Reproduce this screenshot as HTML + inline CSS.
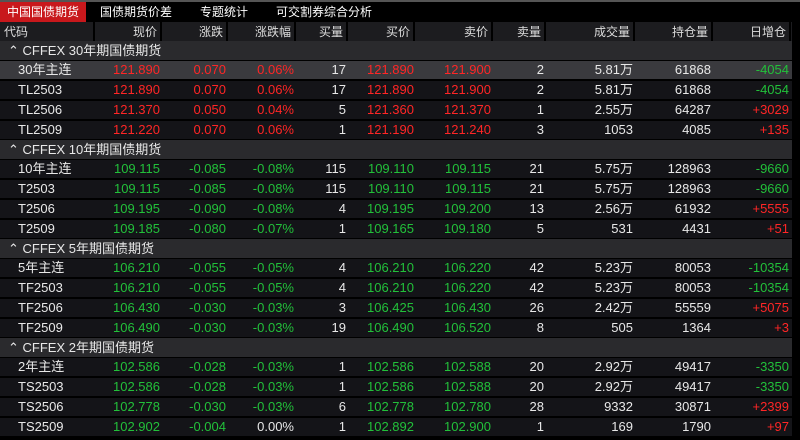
<!DOCTYPE html>
<html><head><meta charset="utf-8"><style>
*{margin:0;padding:0;box-sizing:border-box}
body{width:800px;height:440px;overflow:hidden;background:#000;font-family:"Liberation Sans","Noto Sans CJK SC",sans-serif;font-size:13px;color:#e8e8e8;position:relative}
.top{position:absolute;left:0;top:0;width:800px;height:2px;background:#555}
.tabs{position:absolute;top:2px;left:0;height:20px;display:flex;font-size:12px}
.tabs div{padding:0 14px;line-height:20px;color:#fff}
.tabs .a{background:#c8181c;width:86px;padding:0;text-align:center}
.row{position:absolute;left:0;width:792px;height:18px}
.row span{position:absolute;top:0;line-height:18px;text-align:right;white-space:nowrap}
.hd{top:22px;height:20px;background:#1c1c1f}
.hd span{line-height:20px;color:#ddd;font-size:12px;border-right:2px solid #000;height:20px;padding-right:3px}
.grp{background:#2a2a2d;height:19px}
.grp span{line-height:19px;text-align:left}
.d{background:#141418}
.sel{background:#3a3a3e}
.r{color:#ff2626}.g{color:#22c03a}
</style></head><body>
<div class="top"></div>
<div class="tabs"><div class="a">中国国债期货</div><div>国债期货价差</div><div>专题统计</div><div>可交割券综合分析</div></div>
<div class="row hd">
<span style="left:0;width:95px;text-align:left;padding-left:4px">代码</span>
<span style="left:95px;width:67px">现价</span>
<span style="left:162px;width:66px">涨跌</span>
<span style="left:228px;width:68px">涨跌幅</span>
<span style="left:296px;width:52px">买量</span>
<span style="left:348px;width:67px">买价</span>
<span style="left:415px;width:78px">卖价</span>
<span style="left:493px;width:53px">卖量</span>
<span style="left:546px;width:89px">成交量</span>
<span style="left:635px;width:78px">持仓量</span>
<span style="left:713px;width:78px">日增仓</span>
</div>
<div id="t"></div>
<script>
const C=[162,228,296,348,416,493,546,635,713,791];
const G=[
["CFFEX 30年期国债期货","r",[
["30年主连","121.890","0.070","0.06%","17","121.890","121.900","2","5.81万","61868","-4054"],
["TL2503","121.890","0.070","0.06%","17","121.890","121.900","2","5.81万","61868","-4054"],
["TL2506","121.370","0.050","0.04%","5","121.360","121.370","1","2.55万","64287","+3029"],
["TL2509","121.220","0.070","0.06%","1","121.190","121.240","3","1053","4085","+135"]]],
["CFFEX 10年期国债期货","g",[
["10年主连","109.115","-0.085","-0.08%","115","109.110","109.115","21","5.75万","128963","-9660"],
["T2503","109.115","-0.085","-0.08%","115","109.110","109.115","21","5.75万","128963","-9660"],
["T2506","109.195","-0.090","-0.08%","4","109.195","109.200","13","2.56万","61932","+5555"],
["T2509","109.185","-0.080","-0.07%","1","109.165","109.180","5","531","4431","+51"]]],
["CFFEX 5年期国债期货","g",[
["5年主连","106.210","-0.055","-0.05%","4","106.210","106.220","42","5.23万","80053","-10354"],
["TF2503","106.210","-0.055","-0.05%","4","106.210","106.220","42","5.23万","80053","-10354"],
["TF2506","106.430","-0.030","-0.03%","3","106.425","106.430","26","2.42万","55559","+5075"],
["TF2509","106.490","-0.030","-0.03%","19","106.490","106.520","8","505","1364","+3"]]],
["CFFEX 2年期国债期货","g",[
["2年主连","102.586","-0.028","-0.03%","1","102.586","102.588","20","2.92万","49417","-3350"],
["TS2503","102.586","-0.028","-0.03%","1","102.586","102.588","20","2.92万","49417","-3350"],
["TS2506","102.778","-0.030","-0.03%","6","102.778","102.780","28","9332","30871","+2399"],
["TS2509","102.902","-0.004","0.00%","1","102.892","102.900","1","169","1790","+97"]]]];
let h="",y=41,first=true;
for(const [name,cl,rows] of G){
 h+=`<div class="row grp" style="top:${y}px"><span style="left:8px">&#8963; ${name}</span></div>`;y+=19;
 rows.forEach((r,i)=>{
  let cls=first?"sel":"d";first=false;
  h+=`<div class="row ${cls}" style="top:${y+1}px"><span style="left:18px;text-align:left">${r[0]}</span>`;
  for(let k=1;k<11;k++){
   let c="";
   if(k<=3||k==5||k==6){c=cl; if(k==3&&r[3]=="0.00%")c="";}
   if(k==10)c=r[10][0]=="-"?"g":"r";
   h+=`<span class="${c}" style="right:${792-C[k-1]+2}px">${r[k]}</span>`;
  }
  h+=`</div>`;y+=20;
 });
}
document.getElementById("t").innerHTML=h;
</script>
</body></html>
